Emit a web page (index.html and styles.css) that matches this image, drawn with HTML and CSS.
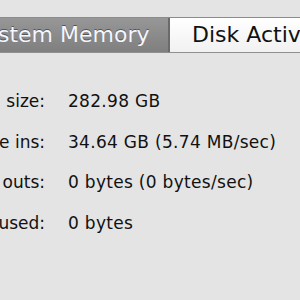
FILE: index.html
```html
<!DOCTYPE html>
<html>
<head>
<meta charset="utf-8">
<link rel="stylesheet" href="styles.css">
</head>
<body>
<div class="window">
  <div class="tabbar">
    <div class="tab tab-selected">System Memory</div>
    <div class="tab tab-normal">Disk Activity</div>
  </div>
  <div class="stats">
    <div class="row"><span class="label">VM size:</span><span class="value">282.98 GB</span></div>
    <div class="row"><span class="label">Page ins:</span><span class="value">34.64 GB (5.74 MB/sec)</span></div>
    <div class="row"><span class="label">Page outs:</span><span class="value">0 bytes (0 bytes/sec)</span></div>
    <div class="row"><span class="label">Swap used:</span><span class="value">0 bytes</span></div>
  </div>
</div>
</body>
</html>
```

FILE: styles.css
```css
html, body {
  margin: 0;
  padding: 0;
  width: 300px;
  height: 300px;
  overflow: hidden;
  background: #e4e4e4;
}
.window {
  width: 300px;
  height: 300px;
  overflow: hidden;
  font-family: "DejaVu Sans", "Liberation Sans", sans-serif;
  padding-top: 17px;
  box-sizing: border-box;
}
.tabbar {
  display: flex;
  height: 36px;
  margin-left: -31px;
  width: 460px;
  border-top: 1px solid #8c8c8c;
  border-bottom: 1px solid #8f8f8f;
  box-sizing: border-box;
}
.tab {
  font-size: 22px;
  line-height: 34px;
  white-space: nowrap;
  box-sizing: border-box;
}
.tab-selected {
  width: 201px;
  padding-left: 2px;
  color: #f4f7ff;
  background: linear-gradient(#979797, #7f7f7f);
  border-right: 2px solid #6a6a6a;
  text-shadow: 0 -1px 0 #555;
}
.tab-normal {
  flex: 1;
  padding-left: 22px;
  color: #111;
  background: linear-gradient(#ffffff, #f1f1f1);
}
.stats {
  display: flex;
  flex-direction: column;
  padding-top: 38px;
}
.row {
  display: flex;
  height: 40.5px;
  align-items: flex-start;
  font-size: 17px;
  color: #111;
}
.label {
  width: 45px;
  white-space: nowrap;
  display: flex;
  justify-content: flex-end;
  flex-shrink: 0;
}
.value {
  margin-left: 23px;
  letter-spacing: 0.3px;
  white-space: nowrap;
}
```
